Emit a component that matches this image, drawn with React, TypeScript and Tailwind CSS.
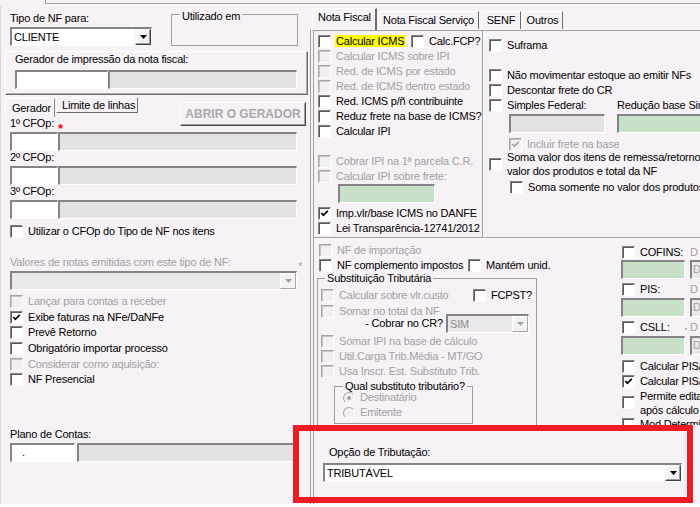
import React from 'react';

const DIS = 'text-[#a4a0a4]';
const EDGE =
  'border-t-2 border-l-2 border-b border-r border-t-[#858385] border-l-[#858385] border-b-white border-r-white';

function Box({ checked = false, disabled = false }: { checked?: boolean; disabled?: boolean }) {
  return (
    <span
      className={
        disabled
          ? 'flex h-[13px] w-[13px] shrink-0 items-center justify-center border border-t-[#a8a4a8] border-l-[#a8a4a8] border-b-white border-r-white bg-[#f3f0f3] shadow-[inset_1px_1px_0_#c8c4c8]'
          : 'flex h-[13px] w-[13px] shrink-0 items-center justify-center border border-t-[#858385] border-l-[#858385] border-b-white border-r-white bg-white shadow-[inset_1px_1px_0_#5a5a5a]'
      }
    >
      {checked && (
        <svg width="9" height="9" viewBox="0 0 9 9">
          <path
            d="M1.3 4 L3.4 6.3 L7.8 1.8"
            fill="none"
            stroke={disabled ? '#a4a0a4' : '#000000'}
            strokeWidth="1.7"
          />
        </svg>
      )}
    </span>
  );
}

type CBProps = {
  label: React.ReactNode;
  checked?: boolean;
  disabled?: boolean;
  className?: string;
  h?: string;
};

function CB({ label, checked = false, disabled = false, className = '', h = 'h-[15px]' }: CBProps) {
  return (
    <div className={`flex shrink-0 items-center ${h} ${className}`}>
      <Box checked={checked} disabled={disabled} />
      <span className={`ml-[5px] whitespace-nowrap ${disabled ? DIS : ''}`}>{label}</span>
    </div>
  );
}

function Radio({ label, checked = false, className = '' }: { label: string; checked?: boolean; className?: string }) {
  return (
    <div className={`flex shrink-0 items-center ${className}`}>
      <span className="flex h-[12px] w-[12px] shrink-0 items-center justify-center rounded-full border border-t-[#a8a4a8] border-l-[#a8a4a8] border-b-white border-r-white bg-[#f3f0f3]">
        {checked && <span className="h-[4px] w-[4px] rounded-full bg-[#a4a0a4]" />}
      </span>
      <span className={`ml-[5px] whitespace-nowrap ${DIS}`}>{label}</span>
    </div>
  );
}

function Edit({ className = '', children }: { className?: string; children?: React.ReactNode }) {
  return <div className={`h-[19px] shrink-0 overflow-hidden ${EDGE} ${className}`}>{children}</div>;
}

function Arrow({ disabled = false }: { disabled?: boolean }) {
  return (
    <div
      className={
        disabled
          ? 'flex w-[16px] shrink-0 items-center justify-center border border-t-white border-l-white border-b-[#a8a4a8] border-r-[#a8a4a8] bg-[#f4f1f4]'
          : 'flex w-[16px] shrink-0 items-center justify-center border border-t-[#f4f1f4] border-l-[#f4f1f4] border-b-[#404040] border-r-[#404040] bg-[#f4f1f4] shadow-[inset_-1px_-1px_0_#a09ca0,inset_1px_1px_0_#ffffff]'
      }
    >
      <svg width="7" height="4" viewBox="0 0 7 4">
        <path d="M0 0 H7 L3.5 4 Z" fill={disabled ? '#a4a0a4' : '#000000'} />
      </svg>
    </div>
  );
}

function Combo({ value, disabled = false, className = '' }: { value: string; disabled?: boolean; className?: string }) {
  return (
    <div className={`flex h-[19px] shrink-0 ${EDGE} ${disabled ? 'bg-[#ebe8eb]' : 'bg-white'} ${className}`}>
      <div
        className={`flex-1 overflow-hidden whitespace-nowrap pl-[2px] leading-[16px] ${disabled ? 'text-[#8c888c]' : ''}`}
      >
        {value}
      </div>
      <Arrow disabled={disabled} />
    </div>
  );
}

function LeftPanel() {
  return (
    <div className="flex w-[310px] shrink-0 flex-col shadow-[inset_1px_0_0_#dcd8dc]">
      <div className="flex shrink-0 pl-[10px]">
        <div className="w-[142px] pt-[6px]">
          <div className="h-[15px]">Tipo de NF para:</div>
          <Combo value="CLIENTE" className="w-[142px]" />
        </div>
        <fieldset className="ml-[19px] h-[40px] w-[127px] border border-[#a09ca0]">
          <legend className="ml-[8px] px-[2px] pt-[4px] leading-[13px]">Utilizado em</legend>
        </fieldset>
      </div>

      <div className="ml-[5px] mt-[5px] h-[44px] w-[303px] shrink-0 border border-t-white border-l-white border-b-[#6e6c6e] border-r-[#6e6c6e] pl-[9px] pt-[1px] shadow-[inset_-1px_-1px_0_#b0acb0]">
        <div className="h-[17px]">Gerador de impressão da nota fiscal:</div>
        <div className="flex">
          <Edit className="w-[93px] bg-white" />
          <Edit className="w-[189px] bg-[#e5e2e5]" />
        </div>
      </div>

      <div className="flex h-[22px] shrink-0 pl-[5px]">
        <div className="mt-[3px] h-[19px] w-[50px] border-l border-t border-r border-t-white border-l-white border-r-[#8a888a] pl-[6px] pt-[3px]">
          Gerador
        </div>
        <div className="ml-[1px] mt-[2px] h-[16px] w-[82px] border border-t-white border-l-white border-b-[#6e6c6e] border-r-[#6e6c6e] pl-[5px] pt-[1px]">
          Limite de linhas
        </div>
        <div className="ml-[42px] mt-[7px] flex h-[24px] w-[126px] shrink-0 items-center justify-center border border-t-white border-l-white border-b-[#4a484a] border-r-[#4a484a] text-[12px] font-bold tracking-normal text-[#aca8ac] shadow-[inset_-1px_-1px_0_#a09ca0]">
          ABRIR O GERADOR
        </div>
      </div>

      <div className="flex shrink-0 flex-col pl-[10px]">
        <div className="flex h-[15px]">
          <span>1º CFOp:</span>
          <span className="ml-[4px] mt-[7px] text-[13px] font-bold leading-[10px] text-[#ff0000]">*</span>
        </div>
        <div className="flex">
          <Edit className="w-[48px] bg-white" />
          <Edit className="w-[239px] bg-[#e5e2e5]" />
        </div>
        <div className="h-[15px]">2º CFOp:</div>
        <div className="flex">
          <Edit className="w-[48px] bg-white" />
          <Edit className="w-[239px] bg-[#e5e2e5]" />
        </div>
        <div className="h-[15px]">3º CFOp:</div>
        <div className="flex">
          <Edit className="w-[48px] bg-white" />
          <Edit className="w-[239px] bg-[#e5e2e5]" />
        </div>
        <CB className="mt-[5px]" label="Utilizar o CFOp do Tipo de NF nos itens" />
      </div>

      <div className="mt-[17px] flex h-[15px] w-[302px] shrink-0 justify-between pl-[10px]">
        <span className={DIS}>Valores de notas emitidas com este tipo de NF:</span>
        <span className="mt-[6px] text-[10px] leading-[10px] text-[#a4a0a4]">*</span>
      </div>
      <div className="shrink-0 pl-[10px]">
        <Combo disabled value="" className="w-[287px]" />
      </div>

      <div className="mt-[4px] flex shrink-0 flex-col pl-[10px]">
        <CB h="h-[15.6px]" disabled label="Lançar para contas a receber" />
        <CB h="h-[15.6px]" checked label="Exibe faturas na NFe/DaNFe" />
        <CB h="h-[15.6px]" label="Prevê Retorno" />
        <CB h="h-[15.6px]" label="Obrigatório importar processo" />
        <CB h="h-[15.6px]" disabled label="Considerar como aquisição:" />
        <CB h="h-[15.6px]" label="NF Presencial" />
      </div>

      <div className="mt-[40px] h-[15px] shrink-0 pl-[10px]">Plano de Contas:</div>
      <div className="flex shrink-0 pl-[10px]">
        <Edit className="w-[65px] bg-white pl-[10px] leading-[15px]">.</Edit>
        <Edit className="ml-[2px] w-[220px] bg-[#e5e2e5]" />
      </div>
    </div>
  );
}

function Tab({ label, className }: { label: string; className: string }) {
  return (
    <div
      className={`h-[18px] shrink-0 border-l border-t border-r border-t-white border-l-white border-r-[#6e6c6e] pt-[2px] text-center whitespace-nowrap ${className}`}
    >
      {label}
    </div>
  );
}

function RightPanel() {
  return (
    <div className="flex w-[390px] shrink-0 flex-col">
      <div className="flex h-[23px] shrink-0 items-end pl-[2px]">
        <div className="relative z-10 -mb-[1px] h-[22px] w-[65px] shrink-0 border-l border-t border-r-2 border-t-white border-l-white border-r-[#6e6c6e] bg-[#f6f2f6] pl-[5px] pt-[2px] whitespace-nowrap">
          Nota Fiscal
        </div>
        <Tab label="Nota Fiscal Serviço" className="ml-[1px] w-[101px]" />
        <Tab label="SENF" className="ml-[2px] w-[40px]" />
        <Tab label="Outros" className="ml-[1px] w-[41px]" />
      </div>

      <div className="flex flex-1 flex-col border-l border-t border-l-[#a09ca0] border-t-white pl-[2px]">
        <div className="flex flex-1 flex-col border-l border-t border-[#a09ca0]">
          {/* upper frames */}
          <div className="flex h-[207px] shrink-0">
            <div className="flex w-[169px] shrink-0 flex-col overflow-hidden border-b border-r border-[#a09ca0] pl-[4px] pt-[2.5px]">
              <div className="flex shrink-0">
                <CB
                  className="w-[93px]"
                  label={<span className="-ml-[1px] bg-[#ffff00] px-[1px]">Calcular ICMS</span>}
                />
                <CB label="Calc.FCP?" />
              </div>
              <CB disabled label="Calcular ICMS sobre IPI" />
              <CB disabled label="Red. de ICMS por estado" />
              <CB disabled label="Red. de ICMS dentro estado" />
              <CB label="Red. ICMS p/ñ contribuinte" />
              <CB label="Reduz frete na base de ICMS?" />
              <CB label="Calcular IPI" />
              <div className="h-[15px] shrink-0" />
              <CB disabled label="Cobrar IPI na 1ª parcela C.R." />
              <CB disabled label="Calcular IPI sobre frete:" />
              <Edit className="ml-[20px] w-[97px] bg-[#c8e0c8]" />
              <CB className="mt-[3px]" checked label="Imp.vlr/base ICMS no DANFE" />
              <CB label="Lei Transparência-12741/2012" />
            </div>

            <div className="flex flex-1 flex-col overflow-hidden border-b border-l border-b-[#a09ca0] border-l-white pl-[5px] pt-[6.5px]">
              <CB label="Suframa" />
              <div className="h-[15px] shrink-0" />
              <CB label="Não movimentar estoque ao emitir NFs" />
              <CB label="Descontar frete do CR" />
              <div className="flex shrink-0">
                <CB className="w-[128px]" label="Simples Federal:" />
                <span className="whitespace-nowrap leading-[15px]">Redução base Simples:</span>
              </div>
              <div className="mt-[1.5px] flex shrink-0 pl-[20px]">
                <Edit className="w-[96px] bg-[#e5e2e5]" />
                <Edit className="ml-[12px] w-[100px] bg-[#c8e0c8]" />
              </div>
              <CB className="ml-[20px] mt-[3.5px]" checked disabled label="Incluir frete na base" />
              <div className="-mt-[1.5px] flex h-[28px] shrink-0 items-center">
                <Box />
                <div className="ml-[5px] flex flex-col whitespace-nowrap leading-[14px]">
                  <span>Soma valor dos itens de remessa/retorno no</span>
                  <span>valor dos produtos e total da NF</span>
                </div>
              </div>
              <CB className="ml-[21px] mt-[1.5px]" label="Soma somente no valor dos produtos" />
            </div>
          </div>

          {/* lower area */}
          <div className="flex h-[187px] shrink-0 border-t border-white">
            <div className="flex w-[307px] shrink-0 flex-col pl-[3px]">
              <CB className="ml-[2px] mt-[4px]" disabled label="NF de importação" />
              <div className="ml-[2px] flex shrink-0">
                <CB className="w-[149px]" label="NF complemento impostos" />
                <CB label="Mantém unid." />
              </div>
              <fieldset className="mt-[0.5px] w-[220px] shrink-0 border border-[#a09ca0]">
                <legend className="ml-[7px] px-[2px] leading-[9px]">Substituição Tributária</legend>
                <div className="flex flex-col pb-[1px] pl-[3px]">
                  <div className="mt-[5px] flex shrink-0">
                    <CB className="w-[152px]" disabled label="Calcular sobre vlr.custo" />
                    <CB label="FCPST?" />
                  </div>
                  <CB className="mt-[1px]" disabled label="Somar no total da NF" />
                  <div className="-mt-[4.5px] flex h-[19px] shrink-0">
                    <span className="w-[122px] pt-[3px] text-right whitespace-nowrap">- Cobrar no CR?</span>
                    <Combo disabled value="SIM" className="ml-[3px] w-[83px]" />
                  </div>
                  <CB className="mt-[0.5px]" disabled label="Somar IPI na base de cálculo" />
                  <CB disabled label="Util.Carga Trib.Média - MT/GO" />
                  <CB disabled label="Usa Inscr. Est. Substituto Trib." />
                  <fieldset className="ml-[13px] mt-[3px] w-[139px] shrink-0 border border-[#a09ca0]">
                    <legend className="ml-[8px] px-[2px] leading-[9px]">Qual substituto tributário?</legend>
                    <div className="flex flex-col pb-[2px] pl-[8px]">
                      <Radio className="h-[14px]" checked label="Destinatário" />
                      <Radio className="h-[16px]" label="Emitente" />
                    </div>
                  </fieldset>
                </div>
              </fieldset>
            </div>

            <div className="flex flex-1 flex-col overflow-hidden pl-[1px]">
              <div className="mt-[6px] flex shrink-0">
                <CB h="h-[14px]" className="w-[68px]" label="COFINS:" />
                <span className={`leading-[14px] ${DIS}`}>D</span>
              </div>
              <div className="-ml-[1px] mt-[1px] flex shrink-0">
                <Edit className="w-[64px] bg-[#c8e0c8]" />
                <Edit className={`ml-[5px] w-[30px] bg-[#ebe8eb] pl-[1px] leading-[15px] ${DIS}`}>D</Edit>
              </div>
              <div className="mt-[3px] flex shrink-0">
                <CB h="h-[14px]" className="w-[68px]" label="PIS:" />
                <span className={`leading-[14px] ${DIS}`}>D</span>
              </div>
              <div className="-ml-[1px] mt-[2px] flex shrink-0">
                <Edit className="w-[64px] bg-[#c8e0c8]" />
                <Edit className={`ml-[5px] w-[30px] bg-[#ebe8eb] pl-[1px] leading-[15px] ${DIS}`}>D</Edit>
              </div>
              <div className="mt-[3px] flex shrink-0">
                <CB h="h-[14px]" className="w-[63px]" label="CSLL:" />
                <span className="mt-[8px] h-[2px] w-[2px] shrink-0 bg-[#b8b4b8]" />
                <span className={`ml-[3px] leading-[14px] ${DIS}`}>D</span>
              </div>
              <div className="-ml-[1px] mt-[2px] flex shrink-0">
                <Edit className="w-[64px] bg-[#c8e0c8]" />
                <Edit className={`ml-[5px] w-[30px] bg-[#ebe8eb] pl-[1px] leading-[15px] ${DIS}`}>D</Edit>
              </div>
              <CB className="mt-[3.5px]" label="Calcular PIS/COFINS" />
              <CB checked label="Calcular PIS/COFINS" />
              <div className="flex h-[28px] shrink-0 items-center">
                <Box />
                <div className="ml-[5px] flex flex-col whitespace-nowrap leading-[14px]">
                  <span>Permite editar valores</span>
                  <span>após cálculo</span>
                </div>
              </div>
              <CB label="Mod Determinação BC" />
            </div>
          </div>

          {/* bottom: Opção de Tributação */}
          <div className="flex flex-1 flex-col pl-[15px] pt-[21px]">
            <div className="h-[17px] shrink-0">Opção de Tributação:</div>
            <Combo value="TRIBUTÁVEL" className="-ml-[6px] w-[359px]" />
          </div>
        </div>
      </div>
    </div>
  );
}

export default function App() {
  return (
    <div className="relative flex h-[507px] w-[700px] flex-col overflow-hidden bg-[#f6f2f6] font-['Liberation_Sans',Arial,sans-serif] text-[11px] leading-[13px] tracking-[-0.2px] text-black">
      <div className="flex h-[6px] shrink-0">
        <div className="w-[45px] shrink-0" />
        <div className="h-[4px] flex-1 border-b border-l border-[#a09ca0] shadow-[0_1px_0_#ffffff]" />
      </div>
      <div className="flex h-[498px] shrink-0">
        <LeftPanel />
        <RightPanel />
      </div>
      <div className="h-[3px] shrink-0 bg-white" />
      <div className="pointer-events-none absolute left-[293px] top-[425px] h-[78px] w-[400px] border-[6px] border-[#ed1c24]" />
    </div>
  );
}
